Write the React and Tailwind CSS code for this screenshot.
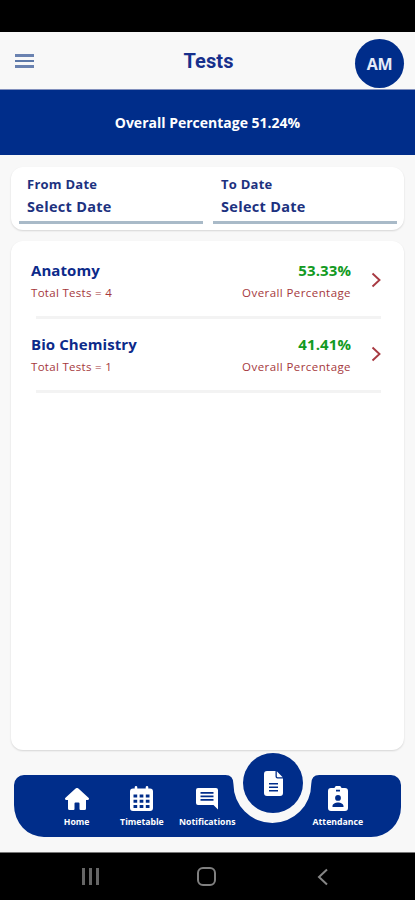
import React from 'react';

const FONT = "font-['Open_Sans','Noto_Sans',sans-serif]";

const subjects = [
  { name: 'Anatomy', tests: 4, percentage: '53.33%' },
  { name: 'Bio Chemistry', tests: 1, percentage: '41.41%' }
];

const HomeIcon = () => (
  <svg viewBox="0 0 24 22" className="h-[22px] w-6" fill="currentColor">
    <path d="M10.6.6a2 2 0 0 1 2.8 0L23.500 9.800c1 .9.5 2.200-.8 2.200H21v8.500a1.500 1.500 0 0 1-1.500 1.500H15.500a1 1 0 0 1-1-1v-5.500a1 1 0 0 0-1-1h-3a1 1 0 0 0-1 1V21a1 1 0 0 1-1 1h-4A1.500 1.500 0 0 1 3 20.500V12H1.300C0 12-.5 10.700.5 9.800z" />
  </svg>
);

const CalendarIcon = () => (
  <svg viewBox="0 0 23 25" className="h-[25px] w-[23px]" fill="currentColor">
    <path
      fillRule="evenodd"
      d="M6 0a1.300 1.300 0 0 1 1.300 1.300V2.500h8.400V1.300a1.300 1.300 0 0 1 2.600 0v1.200H20a3 3 0 0 1 3 3V22a3 3 0 0 1-3 3H3a3 3 0 0 1-3-3V5.500a3 3 0 0 1 3-3h1.700V1.300A1.300 1.300 0 0 1 6 0zM3.500 8.500v3h3.700v-3zm6.150 0v3h3.700v-3zm6.150 0v3h3.700v-3zM3.500 13.800v2.900h3.700v-2.900zm6.150 0v2.900h3.700v-2.900zm6.150 0v2.900h3.700v-2.900zM3.500 19v2.900h3.700V19zm6.150 0v2.900h3.700V19zm6.150 0v2.900h3.700V19z"
    />
  </svg>
);

const CommentIcon = () => (
  <svg viewBox="0 0 22 22" className="h-[22px] w-[22px]" fill="currentColor">
    <path
      fillRule="evenodd"
      d="M2 0h18a2 2 0 0 1 2 2v19.500L17.500 17H2a2 2 0 0 1-2-2V2a2 2 0 0 1 2-2zM4.500 4v1.800h13V4zm0 3.500v1.800h13V7.500zm0 3.500v1.800h13V11z"
    />
  </svg>
);

const AttendanceIcon = () => (
  <svg viewBox="0 0 20 25" className="h-[25px] w-5" fill="currentColor">
    <path
      fillRule="evenodd"
      d="M6.500 2A3.700 3.700 0 0 1 13.500 2H17a3 3 0 0 1 3 3v17a3 3 0 0 1-3 3H3a3 3 0 0 1-3-3V5a3 3 0 0 1 3-3zM8 3.800v1.600h4V3.800zM10 9a2.900 2.900 0 1 0 0 5.800A2.900 2.900 0 0 0 10 9zM4.500 21h11v-1c0-2.300-3-3.500-5.500-3.500S4.500 17.700 4.500 20z"
    />
  </svg>
);

const DocumentIcon = () => (
  <svg viewBox="0 0 19 25" className="h-[25px] w-[19px]" fill="currentColor">
    <path
      fillRule="evenodd"
      d="M3 0h8.500v5.500A2 2 0 0 0 13.500 7.500H19V22a3 3 0 0 1-3 3H3a3 3 0 0 1-3-3V3a3 3 0 0 1 3-3zM5 12v1.600h9V12zm0 3.500v1.600h9v-1.600zm0 3.500v1.600h9V19z"
    />
    <path d="M12.800.3 18.700 6.200h-5a.9.9 0 0 1-.9-.9z" />
  </svg>
);

const DateField = ({ label }) => (
  <div className="h-[49px] flex-1 border-b-[3px] border-[#a9bac8] pl-2">
    <div className="text-[13px] leading-[18px] tracking-[0.25px]">{label}</div>
    <div className="mt-[3px] text-[14.5px] leading-[22px] tracking-[0.3px]">Select Date</div>
  </div>
);

const SubjectRow = ({ subject }) => (
  <div className="h-[74px] pt-[19px]">
    <div className="flex h-[40px] items-center">
      <div>
        <div className="text-[15px] leading-[22px] font-bold tracking-[0.08px] text-[#0c2a8a]">{subject.name}</div>
        <div className="mt-[3px] text-[11.5px] leading-[18px] font-medium tracking-[0.3px] text-[#a5383c]">Total Tests = {subject.tests}</div>
      </div>
      <div className="ml-auto text-right">
        <div className="text-[15px] leading-[22px] font-bold tracking-[0.1px] text-[#129a22]">{subject.percentage}</div>
        <div className="mt-[3px] text-[11.5px] leading-[18px] font-medium tracking-[0.42px] text-[#a5383c]">Overall Percentage</div>
      </div>
      <svg viewBox="0 0 10 16" className="ml-[20px] h-4 w-[10px]" fill="none" stroke="#a83a42" strokeWidth="1.9">
        <path d="M1.500 1.500 8.500 8l-7 6.500" />
      </svg>
    </div>
    <div className="mt-[16px] ml-[5px] h-[3px] w-[345px] bg-[#f3f3f3]" />
  </div>
);

const NavItem = ({ icon, label }) => (
  <div className="flex w-[65.3px] flex-col items-center text-white">
    <div className="flex h-[27px] items-center justify-center">{icon}</div>
    <div className="mt-[4px] text-[8.7px] leading-[12px] font-bold whitespace-nowrap">{label}</div>
  </div>
);

const App = () => {
  return (
    <div className={`flex h-[900px] w-[415px] flex-col bg-[#f8f8f8] ${FONT}`}>
      <div className="h-8 bg-black" />

      {/* Header */}
      <header className="flex h-[57px] items-center justify-between pr-[11px] pl-[15px]">
        <div className="flex w-[49px] flex-col gap-[3px]">
          <div className="h-[3px] w-[19px] bg-[#6a82b0]" />
          <div className="h-[2px] w-[19px] bg-[#5c78a8]" />
          <div className="h-[3px] w-[19px] bg-[#6a82b0]" />
        </div>
        <h1 className="pr-[2px] font-[Roboto,sans-serif] text-[20px] font-bold tracking-[0.1px] text-[#17308c]">Tests</h1>
        <div className="mt-[5px] flex h-[49px] w-[49px] items-center justify-center rounded-full bg-[#002d8a] pt-[1px] text-[16px] font-bold tracking-[-0.3px] text-[#e4ebf8]">
          AM
        </div>
      </header>

      <div className="flex h-[66px] items-center justify-center border-t border-[#8290bd] bg-[#002d8a] text-[14px] font-bold text-white">
        Overall Percentage 51.24%
      </div>

      {/* Date filter */}
      <div className="mx-[11px] mt-3 flex h-[63px] gap-[10px] rounded-[12px] bg-white pt-[8px] pr-[7px] pl-2 font-bold text-[#1d327f] shadow-[0_1px_2px_rgba(0,0,0,0.14)]">
        <DateField label="From Date" />
        <DateField label="To Date" />
      </div>

      {/* Subjects */}
      <div className="mx-[11px] mt-[11px] h-[509px] rounded-[12px] bg-white pr-[23px] pl-5 shadow-[0_1px_2px_rgba(0,0,0,0.14)]">
        {subjects.map((subject) => (
          <SubjectRow key={subject.name} subject={subject} />
        ))}
      </div>

      {/* Bottom navigation */}
      <nav className="relative mx-[14px] mt-[25px] h-[62px]">
        <svg viewBox="0 0 388 62" preserveAspectRatio="none" className="absolute inset-0 h-full w-full" fill="#002d8a">
          <path d="M10 0H212Q220 0 220 9A39 39 0 0 0 298 9Q298 0 306 0H378A10 10 0 0 1 388 10V32A30 30 0 0 1 358 62H30A30 32 0 0 1 0 30V10A10 10 0 0 1 10 0Z" />
        </svg>
        <div className="relative flex pt-[10px] pl-[30px]">
          <NavItem icon={<HomeIcon />} label="Home" />
          <NavItem icon={<CalendarIcon />} label="Timetable" />
          <NavItem icon={<CommentIcon />} label="Notifications" />
          <div className="w-[65.3px]" />
          <NavItem icon={<AttendanceIcon />} label="Attendance" />
        </div>
        <div className="absolute top-[-22px] left-[229px] flex h-[60px] w-[60px] items-center justify-center rounded-full bg-[#002d8a] text-white">
          <DocumentIcon />
        </div>
      </nav>

      {/* System buttons */}
      <div className="mt-[15px] flex h-12 items-center border-t border-[#777] bg-black text-[#858585]">
        <div className="ml-[82px] flex h-[17px] w-[17px] justify-between">
          <div className="w-[3px] bg-[#666]" />
          <div className="w-[3px] bg-[#666]" />
          <div className="w-[3px] bg-[#666]" />
        </div>
        <div className="ml-[98px] h-[19px] w-[19px] rounded-[6px] border-2 border-[#808080]" />
        <svg viewBox="0 0 12 18" className="ml-[101px] h-[18px] w-3" fill="none" stroke="#858585" strokeWidth="2">
          <path d="M10 1.500 2 9l8 7.500" />
        </svg>
      </div>
    </div>
  );
};

export default App;
